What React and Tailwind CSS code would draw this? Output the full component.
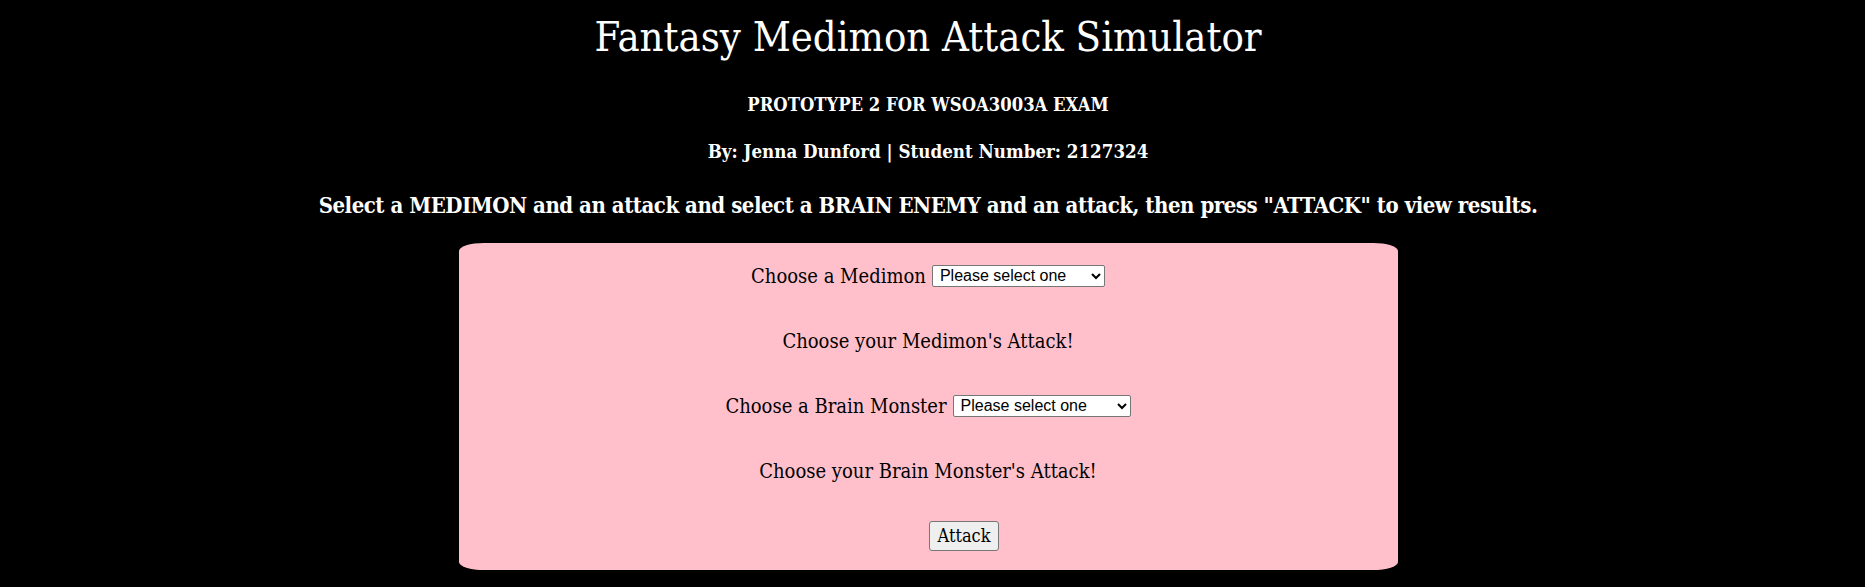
import React from "react";

const serif = "font-['DejaVu_Serif',serif] font-stretch-condensed";
const selectCls =
  "h-[22px] rounded-[2px] border border-[#767676] bg-white pl-[3px] font-['Liberation_Sans',Arial,sans-serif] text-[16px] leading-[20px] text-black";

export default function App() {
  return (
    <div className={`min-h-[587px] w-full bg-black pr-[9px] text-white ${serif}`}>
      <h1 className="h-[74px] text-center text-[41.4px] leading-[74px] font-normal">
        Fantasy Medimon Attack Simulator
      </h1>
      <h3 className="h-[62px] text-center text-[18.3px] leading-[62px] font-bold">
        PROTOTYPE 2 FOR WSOA3003A EXAM
      </h3>
      <h3 className="h-[32px] text-center text-[18.6px] leading-[32px] font-bold">
        By: Jenna Dunford | Student Number: 2127324
      </h3>
      <h2 className="h-[75px] text-center text-[22px] leading-[75px] font-bold tracking-[-0.47px]">
        Select a MEDIMON and an attack and select a BRAIN ENEMY and an attack, then press "ATTACK" to view results.
      </h2>
      <div className="mx-auto h-[327px] w-[939px] rounded-[25px/8px] bg-[#ffc0cb] text-[20px] text-black">
        <div className="flex h-[65px] items-center justify-center gap-[6px]">
          <span>Choose a Medimon</span>
          <select className={`w-[173px] ${selectCls}`}>
            <option>Please select one</option>
          </select>
        </div>
        <div className="flex h-[65px] items-center justify-center">
          <span>Choose your Medimon's Attack!</span>
        </div>
        <div className="flex h-[65px] items-center justify-center gap-[6px]">
          <span>Choose a Brain Monster</span>
          <select className={`w-[178px] ${selectCls}`}>
            <option>Please select one</option>
          </select>
        </div>
        <div className="flex h-[65px] items-center justify-center">
          <span>Choose your Brain Monster's Attack!</span>
        </div>
        <div className="flex h-[65px] items-center justify-center">
          <button className="ml-[72px] flex h-[30px] w-[70px] items-center justify-center rounded-[3px] border border-[#767676] bg-[#efefef] text-[18px] text-black">
            Attack
          </button>
        </div>
      </div>
    </div>
  );
}
